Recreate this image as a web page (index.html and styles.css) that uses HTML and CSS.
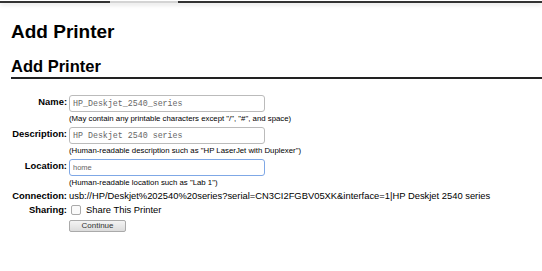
FILE: index.html
```html
<!DOCTYPE html>
<html lang="en">
<head>
  <meta charset="UTF-8">
  <title>Add Printer</title>
  <link rel="stylesheet" href="styles.css">
</head>
<body>
  <div class="tabs">
    <div class="tab dark first"></div>
    <div class="tab light"></div>
    <div class="tab dark rest"></div>
  </div>
  <div class="page">
    <h1 class="title">Add Printer</h1>
    <h2 class="subtitle">Add Printer</h2>
    <form class="printerForm">
      <table class="fields">
        <tr>
          <th>Name:</th>
          <td>
            <input type="text" class="field mono" value="HP_Deskjet_2540_series">
            <div class="hint">(May contain any printable characters except "/", "#", and space)</div>
          </td>
        </tr>
        <tr>
          <th>Description:</th>
          <td>
            <input type="text" class="field mono" value="HP Deskjet 2540 series">
            <div class="hint">(Human-readable description such as "HP LaserJet with Duplexer")</div>
          </td>
        </tr>
        <tr>
          <th>Location:</th>
          <td>
            <input type="text" class="field focus" value="home">
            <div class="hint">(Human-readable location such as "Lab 1")</div>
          </td>
        </tr>
        <tr class="conn">
          <th>Connection:</th>
          <td>usb://HP/Deskjet%202540%20series?serial=CN3CI2FGBV05XK&amp;interface=1|HP Deskjet 2540 series</td>
        </tr>
        <tr class="sharing">
          <th>Sharing:</th>
          <td>
            <label class="share"><span class="box"></span>Share This Printer</label>
          </td>
        </tr>
        <tr>
          <th></th>
          <td><button type="button" class="continue">Continue</button></td>
        </tr>
      </table>
    </form>
  </div>
</body>
</html>
```

FILE: styles.css
```css
body{
  margin: 0;
  background: white;
  color: black;
  font-family: "Liberation Sans", Arial, sans-serif;
}
.tabs{
  display: flex;
  padding-top: 1px;
  box-shadow: 0 2px 4px hsla(0, 0%, 0%, 0.12);
}
.tab{
  height: 2px;
}
.dark{
  background: #333;
}
.light{
  background: #d4d4d4;
  width: 68px;
}
.first{
  width: 110px;
}
.rest{
  flex: 1;
}
.page{
  padding-left: 11px;
}
.title{
  font-size: 19px;
  margin: 17px 0 0 0;
  line-height: 23px;
}
.subtitle{
  font-size: 16.5px;
  margin: 13px 0 0 0;
  line-height: 20px;
  padding-bottom: 1px;
  border-bottom: 2px solid #222;
}
.printerForm{
  margin-top: 16px;
}
.fields{
  border-collapse: collapse;
  font-size: 9.4px;
  line-height: 11px;
}
.fields th{
  text-align: right;
  vertical-align: top;
  padding: 1px 1px 0 0;
  width: 56px;
  white-space: nowrap;
}
.fields td{
  padding: 0 0 0 1px;
  vertical-align: top;
}
.conn th, .conn td{
  padding-top: 0;
  line-height: 10px;
}
.sharing th, .sharing td{
  padding-top: 4px;
  line-height: 10px;
}
.field{
  box-sizing: border-box;
  width: 196px;
  height: 17px;
  border: 1px solid #bbb;
  border-radius: 3px;
  padding: 0 3px;
  margin: 0;
  font-size: 8.3px;
  color: #666;
  display: block;
}
.mono{
  font-family: "Liberation Mono", "Courier New", monospace;
}
.focus{
  border-color: #7fa8e6;
  font-family: "Liberation Sans", Arial, sans-serif;
  font-size: 7.5px;
}
.hint{
  font-size: 7.8px;
  line-height: 9px;
  padding: 2px 0 4px 0;
}
.share{
  display: flex;
  align-items: center;
  gap: 5px;
  padding-left: 2px;
}
.box{
  box-sizing: border-box;
  width: 10px;
  height: 10px;
  border: 1px solid #aaa;
  border-radius: 2px;
  background: #fafafa;
}
.continue{
  display: block;
  margin-top: 5px;
  width: 57px;
  height: 12px;
  padding: 0;
  font-size: 8px;
  line-height: 10px;
  font-family: "Liberation Sans", Arial, sans-serif;
  color: #333;
  border: 1px solid #aaa;
  border-radius: 2px;
  background: linear-gradient(180deg, #f4f4f4, #dcdcdc);
}
```
